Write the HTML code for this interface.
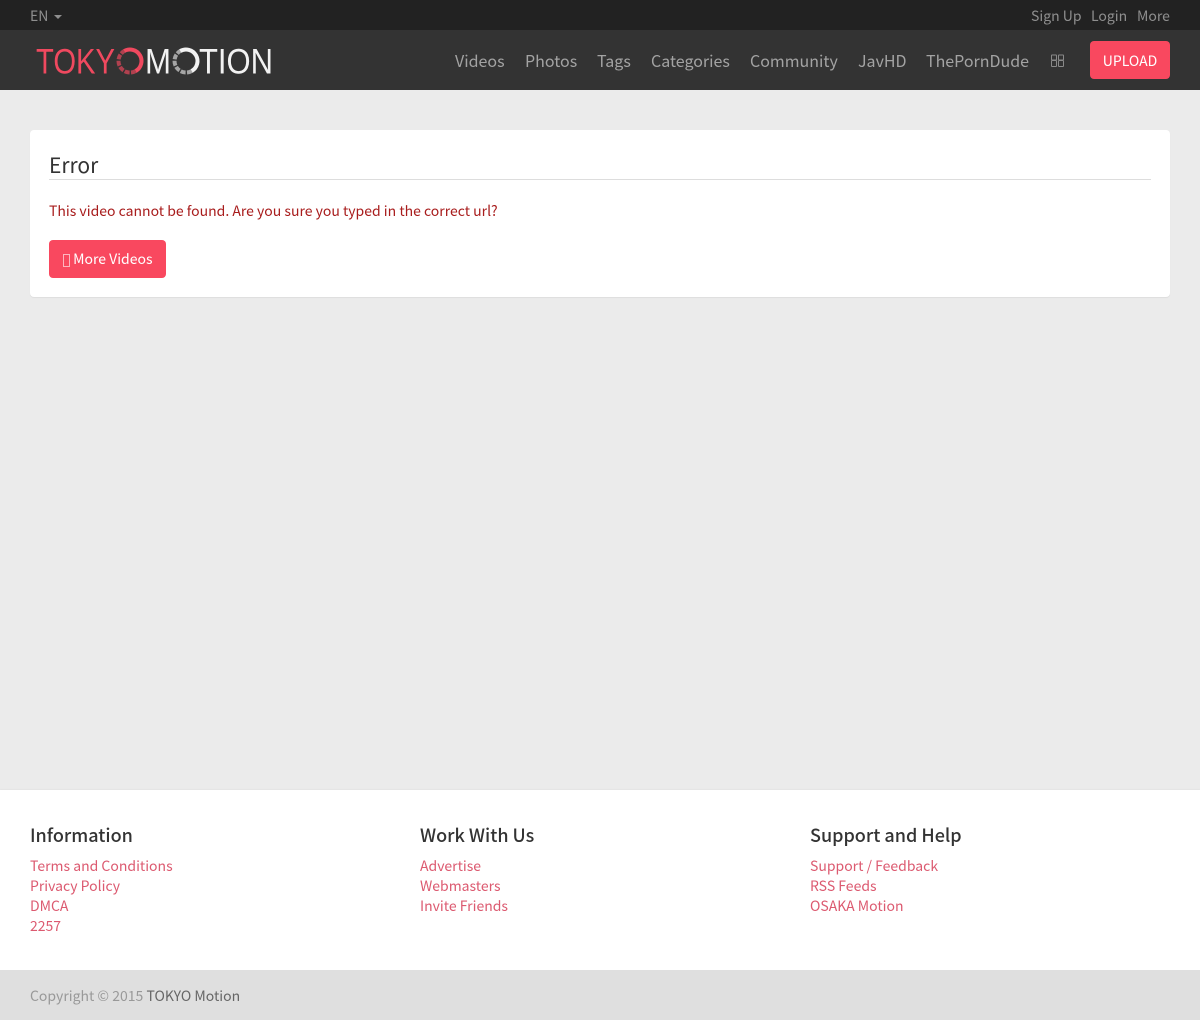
<!DOCTYPE html>
<html lang="en"><head><meta charset="utf-8"><title>TOKYO Motion</title>
<style>
*{box-sizing:border-box}
html,body{margin:0;padding:0}
body{position:relative;width:1200px;height:1020px;overflow:hidden;background:#ebebeb;font-family:"Noto Sans CJK JP","Liberation Sans",sans-serif;font-size:14px;color:#333}
a{text-decoration:none;color:inherit}
.a{position:absolute;white-space:nowrap}
#top{left:0;top:0;width:1200px;height:30px;background:#222}
#nav{left:0;top:30px;width:1200px;height:60px;background:#333}
.t{color:#8f8f8f;font-size:14px;line-height:20px;top:6px}
.n{color:#a3a3a3;font-size:16px;line-height:26px;top:47px}
#up{left:1090px;top:41px;width:80px;height:38px;background:#f9485f;border-radius:4px;color:#fff;font-size:14px;line-height:40px;text-align:center}
#card{left:30px;top:130px;width:1140px;height:167px;background:#fff;border-radius:4px;box-shadow:0 1px 1px rgba(0,0,0,.06)}
#btn{left:49px;top:240px;width:117px;height:38px;background:#f9485f;border-radius:4px;color:#fff;font-size:14px;line-height:38px;padding-left:14px}
.b{display:inline-block;border:1px solid rgba(255,255,255,.6);vertical-align:-3px}
#foot{left:0;top:790px;width:1200px;height:180px;background:#fff;box-shadow:0 -1px 1px rgba(0,0,0,.03)}
#copy{left:0;top:970px;width:1200px;height:50px;background:#dfdfdf}
.h{font-size:18px;line-height:28px;top:821px;color:#333;font-weight:500}
.l{font-size:14px;line-height:20px;color:#dc5a70}
</style></head><body>
<div class="a" id="top"></div>
<div class="a" id="nav"></div>
<div class="a t" style="left:30px">EN</div>
<div class="a" style="left:54px;top:15px;border-top:4px solid #8f8f8f;border-left:4px solid transparent;border-right:4px solid transparent;width:0;height:0"></div>
<a class="a t" style="left:1031px">Sign Up</a>
<a class="a t" style="left:1091px">Login</a>
<a class="a t" style="left:1137px">More</a>

<svg class="a" style="left:30px;top:40px" width="250" height="42" viewBox="30 40 250 42" fill="none">
<text x="36" y="73.500" font-family="Liberation Sans" font-size="35" fill="#f0495f" textLength="79" lengthAdjust="spacingAndGlyphs">TOKY</text>
<circle cx="130" cy="61" r="11.5" stroke="#b0414f" stroke-width="4" stroke-dasharray="5 1.4 5 1.4 5 1.4 5 1.4 5 1.4 4 100" transform="rotate(60 130 61)"/>
<circle cx="130" cy="61" r="11.5" stroke="#f0495f" stroke-width="4" stroke-dasharray="36 100" transform="rotate(-120 130 61)"/>
<text x="145" y="73.500" font-family="Liberation Sans" font-size="35" fill="#f2f2f2" textLength="26" lengthAdjust="spacingAndGlyphs">M</text>
<circle cx="186" cy="61" r="11.5" stroke="#a5a5a5" stroke-width="4" stroke-dasharray="5 1.4 5 1.4 5 1.4 5 1.4 5 1.4 4 100" transform="rotate(60 186 61)"/>
<circle cx="186" cy="61" r="11.5" stroke="#f2f2f2" stroke-width="4" stroke-dasharray="36 100" transform="rotate(-120 186 61)"/>
<text x="199" y="73.500" font-family="Liberation Sans" font-size="35" fill="#f2f2f2" textLength="74" lengthAdjust="spacingAndGlyphs">TION</text>
</svg>

<a class="a n" style="left:455px">Videos</a>
<a class="a n" style="left:525px">Photos</a>
<a class="a n" style="left:597px">Tags</a>
<a class="a n" style="left:651px">Categories</a>
<a class="a n" style="left:750px">Community</a>
<a class="a n" style="left:858px">JavHD</a>
<a class="a n" style="left:926px">ThePornDude</a>
<svg class="a" style="left:1050px;top:54px" width="15" height="14" fill="none" stroke="#8a8a8a"><path d="M2 1h4a.5.5 0 0 1 .5.5v4l-.5.5h-4l-.5-.5v-4a.5.5 0 0 1 .5-.5zM2 6.500h4l.5.5v5l-.5.5h-4l-.5-.5v-5zM9 1h4a.5.5 0 0 1 .5.5v4l-.5.5h-4l-.5-.5v-4a.5.5 0 0 1 .5-.5zM9 6.500h4l.5.5v5l-.5.5h-4l-.5-.5v-5z"/></svg>
<a class="a" id="up">UPLOAD</a>

<div class="a" id="card"></div>
<div class="a" style="left:49px;top:150px;font-size:21px;line-height:30px;color:#333">Error</div>
<div class="a" style="left:49px;top:179px;width:1102px;height:1px;background:#ddd"></div>
<div class="a" style="left:49px;top:201px;font-size:14px;line-height:21px;color:#a81c1c">This video cannot be found. Are you sure you typed in the correct url?</div>
<a class="a" id="btn"><span class="b" style="width:7px;height:13px"></span> More Videos</a>

<div class="a" id="foot"></div>
<div class="a h" style="left:30px">Information</div>
<a class="a l" style="left:30px;top:856px">Terms and Conditions</a>
<a class="a l" style="left:30px;top:876px">Privacy Policy</a>
<a class="a l" style="left:30px;top:896px">DMCA</a>
<a class="a l" style="left:30px;top:916px">2257</a>
<div class="a h" style="left:420px">Work With Us</div>
<a class="a l" style="left:420px;top:856px">Advertise</a>
<a class="a l" style="left:420px;top:876px">Webmasters</a>
<a class="a l" style="left:420px;top:896px">Invite Friends</a>
<div class="a h" style="left:810px">Support and Help</div>
<a class="a l" style="left:810px;top:856px">Support / Feedback</a>
<a class="a l" style="left:810px;top:876px">RSS Feeds</a>
<a class="a l" style="left:810px;top:896px">OSAKA Motion</a>

<div class="a" id="copy"></div>
<div class="a" style="left:30px;top:986px;font-size:14px;line-height:20px;color:#999">Copyright © 2015 <a style="color:#666">TOKYO Motion</a></div>
</body></html>
